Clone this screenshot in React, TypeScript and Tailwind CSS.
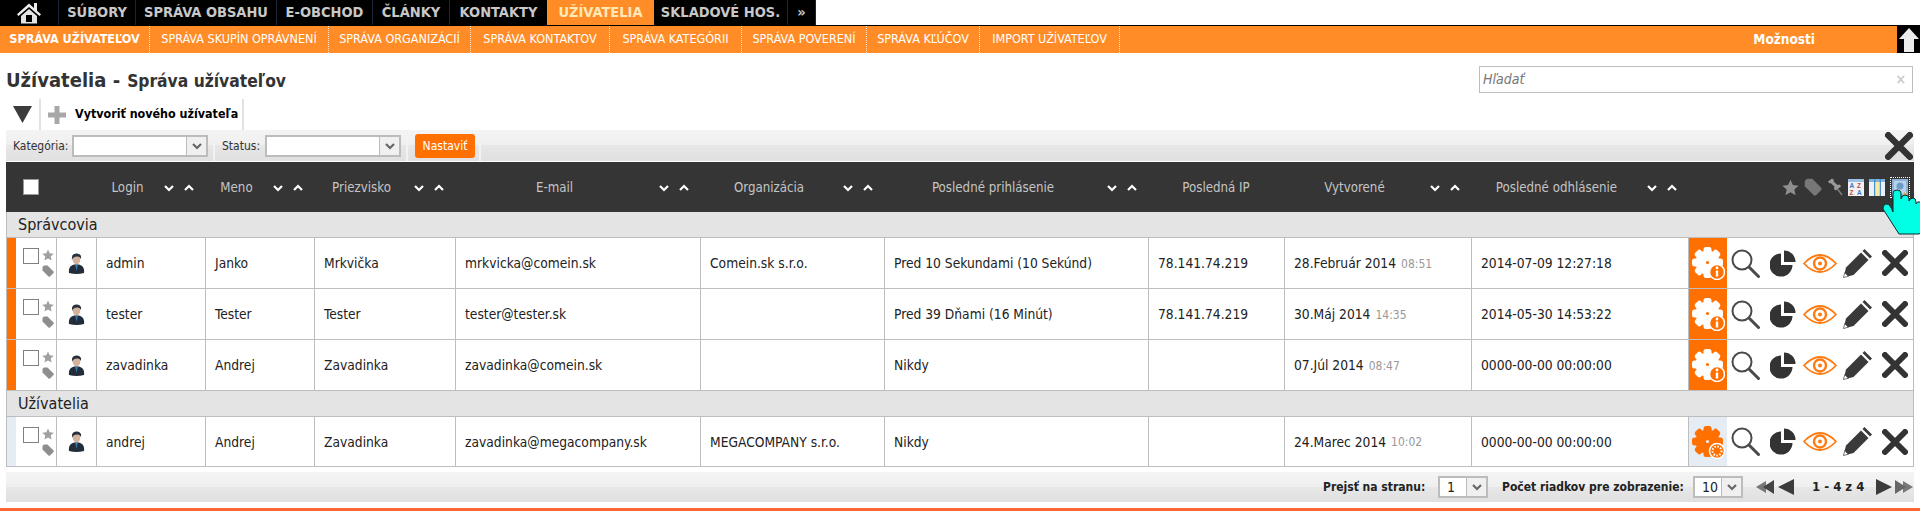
import type { ReactNode } from "react";

const navItems = [
  { label: "SÚBORY", cls: "w-[77px]" },
  { label: "SPRÁVA OBSAHU", cls: "w-[141px]" },
  { label: "E-OBCHOD", cls: "w-[96px]" },
  { label: "ČLÁNKY", cls: "w-[77px]" },
  { label: "KONTAKTY", cls: "w-[97px]" },
  { label: "UŽÍVATELIA", cls: "w-[107px] bg-[#ff8c26] !text-[#ffe9b8]", active: true },
  { label: "SKLADOVÉ HOS.", cls: "w-[134px]" },
  { label: "»", cls: "w-[28px]" },
];

const subItems = [
  { label: "SPRÁVA UŽÍVATEĽOV", cls: "w-[150px] font-bold" },
  { label: "SPRÁVA SKUPÍN OPRÁVNENÍ", cls: "w-[179px]" },
  { label: "SPRÁVA ORGANIZÁCIÍ", cls: "w-[142px]" },
  { label: "SPRÁVA KONTAKTOV", cls: "w-[139px]" },
  { label: "SPRÁVA KATEGÓRII", cls: "w-[132px]" },
  { label: "SPRÁVA POVERENÍ", cls: "w-[125px]" },
  { label: "SPRÁVA KĽÚČOV", cls: "w-[113px]" },
  { label: "IMPORT UŽÍVATEĽOV", cls: "w-[140px]" },
];

const cols = "grid grid-cols-[49px_40px_109px_109px_141px_245px_184px_264px_136px_187px_217px_1fr]";
const gloss = "bg-[linear-gradient(#f4f4f4_0%,#efefef_50%,#e7e7e7_50%,#e0e0e0_100%)]";

type User = {
  login: string;
  first: string;
  last: string;
  email: string;
  org: string;
  lastLogin: string;
  ip: string;
  date: string;
  time: string;
  logout: string;
};

const admins: User[] = [
  { login: "admin", first: "Janko", last: "Mrkvička", email: "mrkvicka@comein.sk", org: "Comein.sk s.r.o.", lastLogin: "Pred 10 Sekundami (10 Sekúnd)", ip: "78.141.74.219", date: "28.Február 2014", time: "08:51", logout: "2014-07-09 12:27:18" },
  { login: "tester", first: "Tester", last: "Tester", email: "tester@tester.sk", org: "", lastLogin: "Pred 39 Dňami (16 Minút)", ip: "78.141.74.219", date: "30.Máj 2014", time: "14:35", logout: "2014-05-30 14:53:22" },
  { login: "zavadinka", first: "Andrej", last: "Zavadinka", email: "zavadinka@comein.sk", org: "", lastLogin: "Nikdy", ip: "", date: "07.Júl 2014", time: "08:47", logout: "0000-00-00 00:00:00" },
];

const users: User[] = [
  { login: "andrej", first: "Andrej", last: "Zavadinka", email: "zavadinka@megacompany.sk", org: "MEGACOMPANY s.r.o.", lastLogin: "Nikdy", ip: "", date: "24.Marec 2014", time: "10:02", logout: "0000-00-00 00:00:00" },
];

function HomeIcon() {
  return (
    <svg width="24" height="22" viewBox="0 0 24 22">
      <path d="M12 1.5 L17 6 V1 H20 V8.7 L24 12.3 L22.5 14 L12 5 L1.5 14 L0 12.3 Z" fill="#ececec" />
      <path d="M4 14 L12 7 L20 14 V21.5 H4 Z M9 13 V20 H15 V13 Z" fill="#e4e4e4" fillRule="evenodd" />
    </svg>
  );
}

function UpArrow() {
  return (
    <svg width="20" height="24" viewBox="0 0 20 24">
      <path d="M10 0 L20 11 H15 V24 H5 V11 H0 Z" fill="#ececec" />
    </svg>
  );
}

function Chevron({ up, color = "#fff" }: { up?: boolean; color?: string }) {
  return (
    <svg width="10" height="8" viewBox="0 0 10 8">
      <polyline points={up ? "1,6 5,2 9,6" : "1,2 5,6 9,2"} fill="none" stroke={color} strokeWidth="2.2" />
    </svg>
  );
}

function Star({ size = 12, color = "#a0a0a0" }: { size?: number; color?: string }) {
  return (
    <svg width={size} height={size} viewBox="0 0 24 24">
      <path d="M12 1 L15.4 8.6 L23.5 9.4 L17.4 14.9 L19.2 23 L12 18.8 L4.8 23 L6.6 14.9 L0.5 9.4 L8.6 8.6 Z" fill={color} />
    </svg>
  );
}

function Tag({ size = 12, color = "#8e8e8e" }: { size?: number; color?: string }) {
  return (
    <svg width={size} height={size} viewBox="0 0 24 24">
      <path d="M1 4 L4 1 H11 L23 13 Q24 15 23 16 L16 23 Q14.5 24 13 23 L1 11 Z" fill={color} />
    </svg>
  );
}

function Pin() {
  return (
    <svg width="16" height="18" viewBox="0 0 16 18">
      <path d="M1 3.5 L5 0.5 L7 2 L6.5 3.5 L10.5 7 L13 6.5 L14 8.5 L8.5 12.5 L7 11 L7.5 8.5 L3.5 5 L2.5 5.5 Z" fill="#9a9a9a" />
      <path d="M10.5 11 L15 17" stroke="#808080" strokeWidth="1.4" />
    </svg>
  );
}

function SortAz() {
  return (
    <svg width="16" height="17" viewBox="0 0 16 17">
      <rect width="16" height="17" fill="#f2f2f2" />
      <rect width="16" height="3" fill="#9cc3e6" />
      <text x="1.5" y="9" fontSize="6.5" fontWeight="700" fill="#3b78c4" fontFamily="Liberation Sans, sans-serif">A</text>
      <text x="9" y="9" fontSize="6.5" fontWeight="700" fill="#c0503a" fontFamily="Liberation Sans, sans-serif">Z</text>
      <text x="1.5" y="16" fontSize="6.5" fontWeight="700" fill="#c0503a" fontFamily="Liberation Sans, sans-serif">Z</text>
      <text x="9" y="16" fontSize="6.5" fontWeight="700" fill="#3b78c4" fontFamily="Liberation Sans, sans-serif">A</text>
    </svg>
  );
}

function TableIcon() {
  return (
    <svg width="16" height="17" viewBox="0 0 16 17">
      <rect width="16" height="17" fill="#e9f1f8" />
      <rect width="16" height="3" fill="#7fb2dc" />
      <rect x="5" width="1.5" height="17" fill="#4d90c8" />
      <rect x="10.5" width="1.5" height="17" fill="#4d90c8" />
      <rect x="6.5" y="3" width="4" height="14" fill="#f6e9a8" />
    </svg>
  );
}

function ExportIcon() {
  return (
    <div className="border border-dotted border-white p-px">
      <svg width="16" height="17" viewBox="0 0 16 17" className="block">
        <rect width="16" height="17" fill="#8fb3d6" />
        <rect x="2" y="2" width="12" height="13" fill="#b8d2ea" />
        <circle cx="8" cy="7" r="3.5" fill="#6d9bc9" />
        <path d="M12 13 L16 17 H12 Z" fill="#e8a040" />
      </svg>
    </div>
  );
}

function Hand() {
  return (
    <svg width="37" height="47" viewBox="0 0 37 47" className="block overflow-visible">
      <path
        d="M10 23 L10 4 Q10 1 14 1 Q18 1 18 4 V10 Q19 6 22 6 Q26 6 26 10 V12 Q27 9 30 9 Q33 9 33 13 V15 Q34 12 37 13 L40 15 V42 L36 45 H16 L0 20 Q0 15 4 15 Q7 15 10 23 Z"
        fill="#00ffe4"
        stroke="#0b2b2b"
        strokeWidth="1"
      />
    </svg>
  );
}

function Avatar() {
  return (
    <svg width="17" height="21" viewBox="0 0 17 21">
      <path d="M1 20 Q0 13 6 11.5 H11 Q17 13 16 20 Q8.5 22 1 20 Z" fill="#232d3a" />
      <path d="M7 11.5 L8.5 18 L10 11.5 Z" fill="#2f78ad" />
      <ellipse cx="8.5" cy="6.5" rx="3.8" ry="4.8" fill="#d4b39c" />
      <path d="M4 7 Q3 0 9 0.5 Q14 1 13 6 Q12 3 9 3.5 Q5 3.5 4 7 Z" fill="#27313d" />
    </svg>
  );
}

function Gear({ color, hub }: { color: string; hub: string }) {
  const teeth = [0, 45, 90, 135, 180, 225, 270, 315];
  return (
    <g>
      {teeth.map((a) => (
        <rect key={a} x="12.5" y="1" width="8" height="9" rx="2.5" fill={color} transform={`rotate(${a} 16.5 16.5)`} />
      ))}
      <circle cx="16.5" cy="16.5" r="12" fill={color} />
      <circle cx="16.5" cy="16.5" r="1.6" fill={hub} />
    </g>
  );
}

function GearInfo({ active }: { active: boolean }) {
  return (
    <svg width="34" height="34" viewBox="0 0 34 34">
      {active ? <Gear color="#ffffff" hub="#ff7000" /> : <Gear color="#ff7000" hub="#e6ecf4" />}
      {active ? (
        <g>
          <circle cx="26" cy="26" r="7.5" fill="#ff7000" stroke="#fff" strokeWidth="1.5" />
          <circle cx="26" cy="22" r="1.4" fill="#fff" />
          <rect x="24.8" y="24.5" width="2.4" height="6" fill="#fff" />
        </g>
      ) : (
        <g>
          <circle cx="26" cy="26" r="7.5" fill="#ff7000" stroke="#fff" strokeWidth="1.5" />
          <circle cx="26" cy="26" r="4.5" fill="none" stroke="#fff" strokeWidth="2" strokeDasharray="1.5 1.5" />
        </g>
      )}
    </svg>
  );
}

function SearchIcon() {
  return (
    <svg width="29" height="29" viewBox="0 0 29 29">
      <circle cx="11" cy="11" r="9.5" fill="none" stroke="#4a4a4a" strokeWidth="2" />
      <line x1="18" y1="18" x2="27.5" y2="27.5" stroke="#4a4a4a" strokeWidth="3" strokeLinecap="round" />
    </svg>
  );
}

function PieIcon() {
  return (
    <svg width="26" height="27" viewBox="0 0 26 27">
      <path d="M11 3.5 A11.5 11.5 0 1 0 22.5 15 H11 Z" fill="#333" />
      <path d="M14 0.5 A11.5 11.5 0 0 1 25.5 12 H14 Z" fill="#333" />
    </svg>
  );
}

function EyeIcon() {
  return (
    <svg width="34" height="19" viewBox="0 0 34 19">
      <path d="M1 9.5 Q9 1 17 1 Q25 1 33 9.5 Q25 18 17 18 Q9 18 1 9.5 Z" fill="none" stroke="#ff7a10" strokeWidth="1.8" />
      <circle cx="17" cy="9.5" r="6" fill="none" stroke="#ff7a10" strokeWidth="2.4" />
      <circle cx="17" cy="9.5" r="2" fill="#ff7a10" />
    </svg>
  );
}

function PencilIcon() {
  return (
    <svg width="29" height="29" viewBox="0 0 29 29">
      <path d="M0.5 28.5 L3 18.5 L18 3.5 L25.5 11 L10.5 26 Z" fill="#3a3a3a" />
      <path d="M0.5 28.5 L1.7 23.7 L5.3 27.3 Z" fill="#fff" stroke="#3a3a3a" strokeWidth="0.6" />
      <path d="M19.5 2 L21.5 0 L29 7.5 L27 9.5 Z" fill="#3a3a3a" />
    </svg>
  );
}

function CloseIcon({ size = 26 }: { size?: number }) {
  return (
    <svg width={size} height={size} viewBox="0 0 26 26">
      <path d="M3 3 L23 23 M23 3 L3 23" stroke="#333" strokeWidth="6" strokeLinecap="round" />
    </svg>
  );
}

function Triangle({ dir }: { dir: "left" | "right" }) {
  return (
    <svg width="16" height="16" viewBox="0 0 16 16">
      <path d={dir === "left" ? "M0 8 L16 0 V16 Z" : "M16 8 L0 0 V16 Z"} fill="#3c3c3c" />
    </svg>
  );
}

function DoubleTriangle({ dir }: { dir: "left" | "right" }) {
  return (
    <svg width="18" height="14" viewBox="0 0 18 14">
      {dir === "left" ? (
        <>
          <path d="M0 7 L10 1 V13 Z" fill="#777" />
          <path d="M7 7 L18 0 V14 Z" fill="#444" />
        </>
      ) : (
        <>
          <path d="M18 7 L8 1 V13 Z" fill="#777" />
          <path d="M11 7 L0 0 V14 Z" fill="#666" />
        </>
      )}
    </svg>
  );
}

function FakeSelect({ width, value }: { width: string; value?: string }) {
  return (
    <div className={`flex h-[22px] border-2 border-[#bcbcbc] bg-white font-normal ${width}`}>
      <div className="flex-1 pl-[7px] text-[14px] leading-[18px] text-[#222]">{value}</div>
      <div className="flex w-[20px] items-center justify-center border-l border-[#bcbcbc] bg-[#f0f0f0]">
        <Chevron color="#666" />
      </div>
    </div>
  );
}

function HeadCell({ label, className = "" }: { label: string; className?: string }) {
  return (
    <div className={`flex items-center pt-px ${className}`}>
      <div className="flex-1 text-center text-[13.2px] text-[#c4c4c4]">{label}</div>
      <div className="ml-[5px] mr-[11px] flex items-center gap-[10px]">
        <Chevron />
        <Chevron up />
      </div>
    </div>
  );
}

function Cell({ children }: { children?: ReactNode }) {
  return (
    <div className="flex items-center whitespace-nowrap border-l border-[#bdbdbd] pl-[9px] pt-px text-[13.7px] text-[#222]">
      {children}
    </div>
  );
}

function Row({ user, admin, last }: { user: User; admin: boolean; last?: boolean }) {
  return (
    <div className={`${cols} border-b border-[#bdbdbd] ${last ? "h-[50px]" : "h-[51px]"}`}>
      <div className="flex">
        <div className={`w-[9px] ${admin ? "bg-[#ff7000]" : "bg-[#e6ecf4]"}`} />
        <div className="ml-[7px] mt-[10px] h-[16px] w-[16px] border-[1.5px] border-[#808080] bg-white" />
        <div className="ml-[3px] mt-[11px] flex w-[12px] flex-col gap-[4px]">
          <Star />
          <Tag />
        </div>
      </div>
      <div className="flex items-center justify-center border-l border-[#bdbdbd]">
        <Avatar />
      </div>
      <Cell>{user.login}</Cell>
      <Cell>{user.first}</Cell>
      <Cell>{user.last}</Cell>
      <Cell>{user.email}</Cell>
      <Cell>{user.org}</Cell>
      <Cell>{user.lastLogin}</Cell>
      <Cell>{user.ip}</Cell>
      <Cell>
        {user.date}
        <span className="ml-[5px] text-[12px] text-[#999]">{user.time}</span>
      </Cell>
      <Cell>{user.logout}</Cell>
      <div className="flex items-center border-l border-[#bdbdbd]">
        <div className={`flex h-full w-[38px] items-center justify-center ${admin ? "bg-[#ff7000]" : "bg-[#e6ecf4]"}`}>
          <GearInfo active={admin} />
        </div>
        <div className="ml-[4px] flex items-center">
          <SearchIcon />
        </div>
        <div className="ml-[10px] flex items-center">
          <PieIcon />
        </div>
        <div className="ml-[7px] flex items-center">
          <EyeIcon />
        </div>
        <div className="ml-[6px] flex items-center">
          <PencilIcon />
        </div>
        <div className="ml-[10px] flex items-center">
          <CloseIcon />
        </div>
      </div>
    </div>
  );
}

function GroupRow({ label }: { label: string }) {
  return (
    <div className="flex h-[26px] items-center border-b border-[#bdbdbd] bg-[#e4e4e4] pl-[11px] text-[16px] text-[#222]">
      {label}
    </div>
  );
}

export default function App() {
  return (
    <div className="relative h-[514px] w-[1920px] overflow-hidden bg-white font-['DejaVu_Sans_Condensed','Liberation_Sans',sans-serif]">
      <div className="h-[26px] border-b border-black">
        <nav className="flex h-[25px] w-[816px] bg-black">
          <div className="flex w-[59px] items-center justify-center border-r border-[#1c2536]">
            <HomeIcon />
          </div>
          {navItems.map((item) => (
            <div
              key={item.label}
              className={`flex items-center justify-center whitespace-nowrap text-[14.5px] font-bold text-[#c8c8c8] ${
                item.active || item.label === "KONTAKTY" ? "" : "border-r border-[#1c2536]"
              } ${item.cls}`}
            >
              {item.label}
            </div>
          ))}
        </nav>
      </div>

      <div className="flex h-[27px] items-center bg-[#ff8c26] text-[12.5px] text-white">
        {subItems.map((item) => (
          <div
            key={item.label}
            className={`flex h-full items-center justify-center whitespace-nowrap border-r border-dotted border-[#ffe4cc] ${item.cls}`}
          >
            {item.label}
          </div>
        ))}
        <div className="ml-auto mr-[82px] text-[13.5px] font-bold">Možnosti</div>
        <div className="flex h-full w-[23px] items-center justify-center bg-black">
          <UpArrow />
        </div>
      </div>

      <div className="flex h-[46px] items-start justify-between pl-[6px] pr-[7px]">
        <h1 className="mt-[17px] flex items-baseline font-bold leading-none text-[#333]">
          <span className="text-[20px]">Užívatelia -</span>
          <span className="ml-[7px] text-[17.3px]">Správa užívateľov</span>
        </h1>
        <div className="mt-[13px] flex h-[27px] w-[434px] items-center justify-between border border-[#bdbdbd] pl-[3px] pr-[6px]">
          <span className="text-[14px] italic text-[#777]">Hľadať</span>
          <span className="text-[14px] font-bold text-[#ccc]">×</span>
        </div>
      </div>

      <div className="px-[6px]">
        <div className="flex h-[31px] items-center">
          <div className="flex h-full w-[35px] items-center justify-center border-r-2 border-[#e2e2e2]">
            <svg width="19" height="17" viewBox="0 0 19 17">
              <path d="M0 0 H19 L9.5 17 Z" fill="#3c3c3c" />
            </svg>
          </div>
          <div className="flex h-full w-[203px] items-center border-r-2 border-[#e2e2e2] pl-[7px]">
            <svg width="18" height="18" viewBox="0 0 18 18" className="shrink-0">
              <path d="M6.5 0 H11.5 V6.5 H18 V11.5 H11.5 V18 H6.5 V11.5 H0 V6.5 H6.5 Z" fill="#a8a8a8" />
            </svg>
            <span className="ml-[9px] whitespace-nowrap text-[12.4px] font-bold text-black">Vytvoriť nového užívateľa</span>
          </div>
        </div>

        <div className={`mb-px flex h-[31px] items-center text-[12px] text-[#333] ${gloss}`}>
          <div className="flex h-full w-[209px] items-center border-r-2 border-[#f2f2f2] pl-[7px]">
            <span className="w-[59px]">Kategória:</span>
            <FakeSelect width="w-[136px]" />
          </div>
          <div className="flex h-full w-[193px] items-center border-r-2 border-[#f2f2f2] pl-[7px]">
            <span className="w-[43px]">Status:</span>
            <FakeSelect width="w-[136px]" />
          </div>
          <div className="flex h-full w-[73px] items-center border-r-2 border-[#f2f2f2] pl-[7px]">
            <div className="flex h-[24px] w-[60px] items-center justify-center rounded-[3px] bg-[#ff7000] text-white">Nastaviť</div>
          </div>
          <div className="ml-auto mr-[1px]">
            <CloseIcon size={28} />
          </div>
        </div>

        <div className={`${cols} h-[50px] bg-[#353535] pl-px pr-px`}>
          <div className="flex items-center pl-[16px]">
            <div className="h-[16px] w-[16px] border border-[#999] bg-white" />
          </div>
          <div />
          <HeadCell label="Login" />
          <HeadCell label="Meno" />
          <HeadCell label="Priezvisko" />
          <HeadCell label="E-mail" />
          <HeadCell label="Organizácia" />
          <HeadCell label="Posledné prihlásenie" />
          <div className="flex items-center justify-center pt-px text-[13.2px] text-[#c4c4c4]">Posledná IP</div>
          <HeadCell label="Vytvorené" />
          <HeadCell label="Posledné odhlásenie" />
          <div className="flex items-center justify-end gap-[5px] pr-[3px]">
            <Star size={17} color="#8e8e8e" />
            <Tag size={18} color="#777" />
            <Pin />
            <SortAz />
            <TableIcon />
            <ExportIcon />
          </div>
        </div>

        <div className="border-x border-[#bdbdbd]">
          <GroupRow label="Správcovia" />
          {admins.map((user) => (
            <Row key={user.login} user={user} admin />
          ))}
          <GroupRow label="Užívatelia" />
          {users.map((user) => (
            <Row key={user.login} user={user} admin={false} last />
          ))}
        </div>

        <div className={`mt-[5px] flex h-[30px] items-center justify-end pr-px text-[12px] font-bold text-[#222] ${gloss}`}>
          <span className="w-[104px] whitespace-nowrap">Prejsť na stranu:</span>
          <div className="ml-[11px]">
            <FakeSelect width="w-[50px]" value="1" />
          </div>
          <span className="ml-[14px] w-[180px] whitespace-nowrap">Počet riadkov pre zobrazenie:</span>
          <div className="ml-[11px]">
            <FakeSelect width="w-[50px]" value="10" />
          </div>
          <div className="ml-[13px] flex items-center gap-[4px]">
            <DoubleTriangle dir="left" />
            <Triangle dir="left" />
          </div>
          <span className="ml-[18px] w-[50px] whitespace-nowrap text-center text-[13px]">1 - 4 z 4</span>
          <div className="ml-[14px] flex items-center gap-[3px]">
            <Triangle dir="right" />
            <DoubleTriangle dir="right" />
          </div>
        </div>
      </div>

      <div className="mt-[6px] h-[3px] bg-[#ff6633]" />

      <div className="absolute left-[1883px] top-[189px]">
        <Hand />
      </div>
    </div>
  );
}
